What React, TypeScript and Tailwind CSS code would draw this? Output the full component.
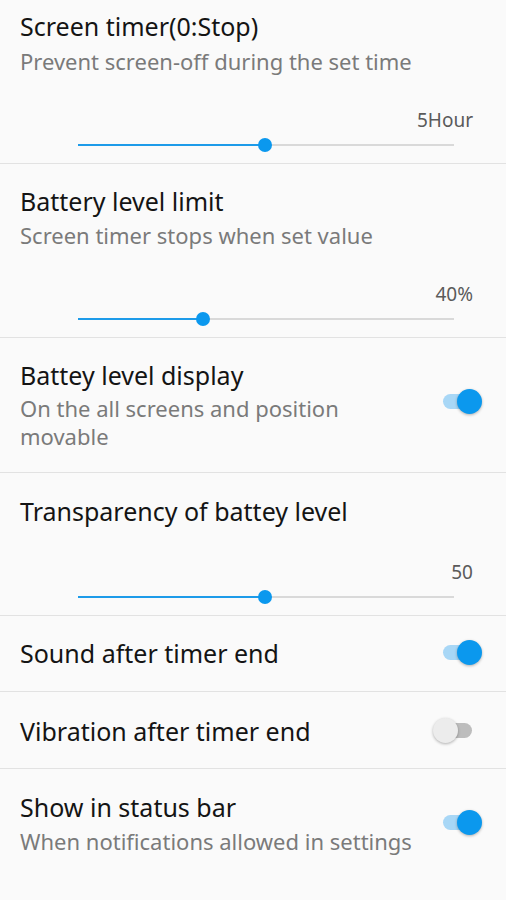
import React from "react";

const font = { fontFamily: "'Noto Sans', 'Open Sans', sans-serif" };

function Slider({ frac }: { frac: number }) {
  return (
    <div className="relative h-5 mt-px ml-[78px] mr-[52px] flex items-center">
      <div className="h-[2px] w-full bg-[#d9d9d9]" />
      <div className="absolute left-0 h-[2px] bg-[#1d9be9]" style={{ width: `${frac * 100}%` }} />
      <div
        className="absolute w-[14px] h-[14px] rounded-full bg-[#0b98ee] -translate-x-1/2"
        style={{ left: `${frac * 100}%` }}
      />
    </div>
  );
}

function Toggle({ on }: { on: boolean }) {
  return (
    <div className="relative w-[50px] h-[26px] shrink-0">
      {on ? (
        <>
          <div className="absolute left-[10px] top-[5px] w-[36px] h-[15px] rounded-full bg-[#a8d7f6]" />
          <div className="absolute left-[24px] top-0 w-[25px] h-[25px] rounded-full bg-[#0b98ee] shadow-[0_1px_3px_rgba(0,0,0,0.3)]" />
        </>
      ) : (
        <>
          <div className="absolute left-[3px] top-[5px] w-[36px] h-[15px] rounded-full bg-[#bdbdbd]" />
          <div className="absolute left-0 top-0 w-[25px] h-[25px] rounded-full bg-[#ececec] shadow-[0_1px_3px_rgba(0,0,0,0.3)]" />
        </>
      )}
    </div>
  );
}

const Title = ({ children }: { children: React.ReactNode }) => (
  <div className="text-[25px] leading-[32px] text-[#141414]">{children}</div>
);
const Sub = ({ children }: { children: React.ReactNode }) => (
  <div className="text-[22px] leading-[28px] text-[#7a7a7a]">{children}</div>
);
const Value = ({ children }: { children: React.ReactNode }) => (
  <div className="text-right pr-[33px] text-[19px] leading-[28px] text-[#5a5a5a]">{children}</div>
);
const Divider = () => <div className="h-px bg-[#e2e2e2]" />;

export default function App() {
  return (
    <div className="w-[506px] h-[900px] bg-[#fafafa] overflow-hidden" style={font}>
      {/* Section 1 */}
      <div className="pt-[10px] pb-2">
        <div className="pl-5">
          <Title>Screen timer(0:Stop)</Title>
          <div className="mt-[5px]">
            <Sub>Prevent screen-off during the set time</Sub>
          </div>
        </div>
        <div className="mt-[31px]">
          <Value>5Hour</Value>
        </div>
        <Slider frac={0.497} />
      </div>
      <Divider />
      {/* Section 2 */}
      <div className="pt-[21px] pb-2">
        <div className="pl-5">
          <Title>Battery level limit</Title>
          <div className="mt-1">
            <Sub>Screen timer stops when set value</Sub>
          </div>
        </div>
        <div className="mt-[31px]">
          <Value>40%</Value>
        </div>
        <Slider frac={0.332} />
      </div>
      <Divider />
      {/* Section 3 */}
      <div className="pt-[21px] pb-[22px] pl-5 pr-[23px] flex items-center gap-4">
        <div className="flex-1">
          <Title>Battey level display</Title>
          <div className="mt-[3px] max-w-[360px]">
            <Sub>On the all screens and position movable</Sub>
          </div>
        </div>
        <div className="-mt-[6px]">
          <Toggle on />
        </div>
      </div>
      <Divider />
      {/* Section 4 */}
      <div className="pt-[22px] pb-2">
        <div className="pl-5">
          <Title>Transparency of battey level</Title>
        </div>
        <div className="mt-[31px]">
          <Value>50</Value>
        </div>
        <Slider frac={0.497} />
      </div>
      <Divider />
      {/* Section 5 */}
      <div className="pt-[21px] pb-[22px] pl-5 pr-[23px] flex items-center">
        <div className="flex-1">
          <Title>Sound after timer end</Title>
        </div>
        <Toggle on />
      </div>
      <Divider />
      {/* Section 6 */}
      <div className="pt-[23px] pb-[21px] pl-5 pr-[23px] flex items-center">
        <div className="flex-1">
          <Title>Vibration after timer end</Title>
        </div>
        <Toggle on={false} />
      </div>
      <Divider />
      {/* Section 7 */}
      <div className="pt-[22px] pb-5 pl-5 pr-[23px] flex items-center">
        <div className="flex-1">
          <Title>Show in status bar</Title>
          <div className="mt-1">
            <Sub>When notifications allowed in settings</Sub>
          </div>
        </div>
        <Toggle on />
      </div>
    </div>
  );
}
